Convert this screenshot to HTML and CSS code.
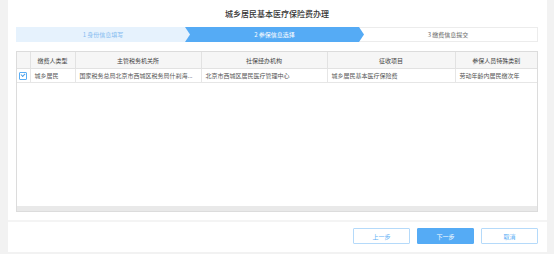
FILE: index.html
```html
<!DOCTYPE html>
<html lang="zh-CN">
<head>
    <meta charset="UTF-8">
    <meta name="viewport" content="width=device-width, initial-scale=1.0">
    <title>城乡居民基本医疗保险费办理</title>
    <link rel="stylesheet" href="styles.css">
</head>
<body>
    <div class="dialog">
        <div class="dialog-body">
            <h1 class="title">城乡居民基本医疗保险费办理</h1>

            <div class="steps">
                <div class="step step-done">1 身份信息填写</div>
                <div class="step step-active">2 参保信息选择</div>
                <div class="step step-todo">3 缴费信息提交</div>
            </div>

            <div class="grid">
                <table class="grid-table">
                    <colgroup>
                        <col style="width: 13px">
                        <col style="width: 45px">
                        <col style="width: 126px">
                        <col style="width: 126px">
                        <col style="width: 128px">
                        <col>
                    </colgroup>
                    <thead>
                        <tr>
                            <th></th>
                            <th>缴费人类型</th>
                            <th>主管税务机关所</th>
                            <th>社保经办机构</th>
                            <th>征收项目</th>
                            <th>参保人员特殊类别</th>
                        </tr>
                    </thead>
                    <tbody>
                        <tr>
                            <td class="check-cell"><span class="checkbox"></span></td>
                            <td>城乡居民</td>
                            <td>国家税务总局北京市西城区税务局什刹海...</td>
                            <td>北京市西城区居民医疗管理中心</td>
                            <td>城乡居民基本医疗保险费</td>
                            <td>劳动年龄内居民缴次年</td>
                        </tr>
                    </tbody>
                </table>
                <div class="grid-scroll"></div>
            </div>
        </div>

        <div class="dialog-footer">
            <button class="btn">上一步</button>
            <button class="btn btn-primary">下一步</button>
            <button class="btn">取消</button>
        </div>
    </div>
</body>
</html>
```

FILE: styles.css
```css
body {
    margin: 0;
    background-color: #f2f2f2;
    font-family: "Noto Sans CJK SC", "Noto Sans", sans-serif;
    color: #333;
}

.dialog {
    margin-left: 8px;
    width: 539px;
    height: 252px;
    background-color: #fff;
    display: flex;
    flex-direction: column;
}

.dialog-body {
    padding: 0 9px 0 8px;
}

.title {
    margin: 0;
    height: 27px;
    line-height: 27px;
    text-align: center;
    font-size: 8px;
    font-weight: 500;
    color: #333;
}

/* step bar */
.steps {
    display: flex;
    height: 15px;
    box-sizing: border-box;
    border: 1px solid #ececec;
}

.step {
    font-size: 6px;
    line-height: 13px;
    text-align: center;
    position: relative;
}

.step-done {
    width: 174px;
    margin: -1px -5px -1px -1px;
    line-height: 15px;
    background-color: #e6f2fd;
    color: #86bdf0;
    z-index: 3;
    clip-path: polygon(0 0, calc(100% - 5px) 0, 100% 50%, calc(100% - 5px) 100%, 0 100%);
}

.step-active {
    width: 179px;
    margin: -1px -5px -1px 0;
    line-height: 15px;
    background-color: #55abf5;
    color: #fff;
    z-index: 2;
    clip-path: polygon(0 0, calc(100% - 5px) 0, 100% 50%, calc(100% - 5px) 100%, 0 100%);
}

.step-todo {
    flex: 1;
    color: #666;
}

/* grid */
.grid {
    margin-top: 9px;
    height: 161px;
    box-sizing: border-box;
    border: 1px solid #dcdcdc;
    display: flex;
    flex-direction: column;
}

.grid-table {
    width: 100%;
    table-layout: fixed;
    border-collapse: collapse;
    font-size: 6px;
}

.grid-table th {
    height: 16px;
    padding: 0 4px;
    background-color: #f6f6f6;
    border-right: 1px solid #e2e2e2;
    border-bottom: 1px solid #e2e2e2;
    font-weight: normal;
    color: #444;
    text-align: center;
}

.grid-table td {
    height: 13px;
    padding: 0 4px;
    border-right: 1px solid #e6e6e6;
    border-bottom: 1px solid #e6e6e6;
    color: #555;
    white-space: nowrap;
}

.grid-table th:last-child,
.grid-table td:last-child {
    border-right: none;
}

.grid-table .check-cell {
    padding: 0;
    text-align: center;
}

.checkbox {
    display: inline-block;
    width: 6px;
    height: 6px;
    border: 1px solid #5aaef5;
    border-radius: 1px;
    position: relative;
    vertical-align: middle;
}

.checkbox::after {
    content: "";
    position: absolute;
    left: 1px;
    top: 0;
    width: 3px;
    height: 2px;
    border-left: 1px solid #4a9fe8;
    border-bottom: 1px solid #4a9fe8;
    transform: rotate(-45deg);
}

.grid-scroll {
    margin-top: auto;
    height: 5px;
    background-color: #e9e9e9;
}

/* footer */
.dialog-footer {
    margin-top: 8px;
    border-top: 2px solid #f4f4f4;
    padding: 6px 9px 0 0;
    display: flex;
    justify-content: flex-end;
    gap: 7px;
}

.btn {
    width: 57px;
    height: 16px;
    padding: 0;
    font-family: inherit;
    font-size: 6px;
    background-color: #fff;
    color: #5aaef5;
    border: 1px solid #b5dafa;
    border-radius: 1px;
    cursor: pointer;
}

.btn-primary {
    background-color: #55abf5;
    border-color: #55abf5;
    color: #fff;
}
```
